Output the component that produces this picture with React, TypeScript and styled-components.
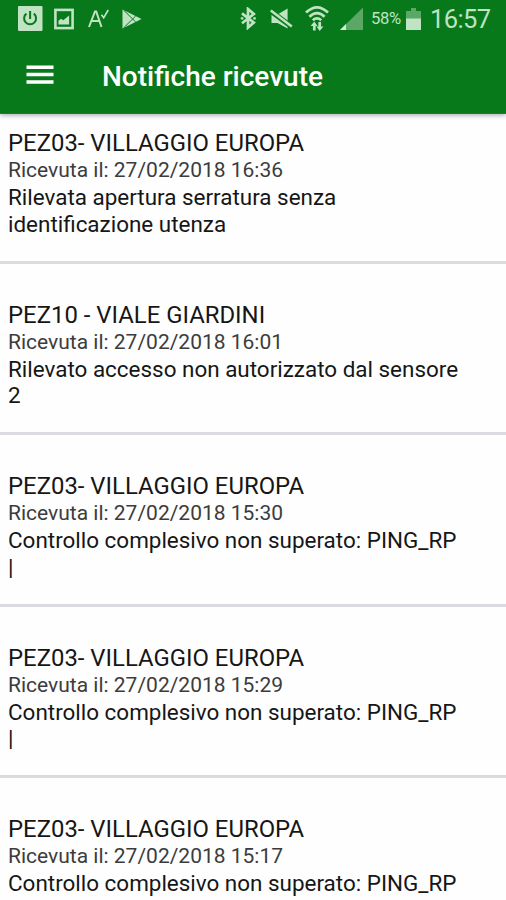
import React from "react";
import styled, { createGlobalStyle } from "styled-components";

const GREEN = "#08791b";
const PALE = "#bfe3c3";

const GlobalStyle = createGlobalStyle`
  *, *::before, *::after { box-sizing: border-box; }
  body {
    margin: 0;
    overflow: hidden;
    background: #fefefe;
    font-family: Roboto, "Liberation Sans", sans-serif;
  }
`;

const Screen = styled.div`
  display: flex;
  flex-direction: column;
  width: 506px;
  height: 900px;
  overflow: hidden;
  background: #fefefe;
`;

const Header = styled.header`
  flex: none;
  height: 114px;
  background: ${GREEN};
  border-bottom: 1px solid #2b7537;
  box-shadow: 0 1px 5px rgba(40, 40, 70, 0.45);
  z-index: 1;
`;

const StatusBar = styled.div`
  display: flex;
  align-items: center;
  height: 37px;
  padding: 0 15px 0 18px;
  color: ${PALE};
`;

const StatusIcon = styled.svg<{ $gap?: number }>`
  display: block;
  flex: none;
  margin-right: ${(p) => p.$gap ?? 0}px;
`;

const Spacer = styled.div`
  flex: 1;
`;

const BatteryLevel = styled.span`
  width: 31px;
  margin-right: 4px;
  font-size: 16.6px;
  line-height: 38px;
  letter-spacing: -0.3px;
  white-space: nowrap;
`;

const Clock = styled.time`
  width: 61px;
  font-size: 25.5px;
  line-height: 40px;
  letter-spacing: -0.6px;
  white-space: nowrap;
`;

const Toolbar = styled.div`
  display: flex;
  align-items: center;
  height: 76px;
  padding-left: 26px;
`;

const MenuButton = styled.button`
  display: block;
  width: 28px;
  height: 20px;
  margin: 0 48px 0 0;
  padding: 0;
  border: 0;
  background: none;
`;

const Title = styled.h1`
  margin: 4px 0 0;
  color: #fff;
  font-size: 28px;
  font-weight: 500;
  line-height: 32px;
  white-space: nowrap;
`;

const List = styled.ul`
  margin: 0;
  padding: 0;
  list-style: none;
`;

const Item = styled.li<{ $first?: boolean }>`
  height: ${(p) => (p.$first ? 149.5 : 171.6)}px;
  padding: ${(p) => (p.$first ? 15 : 37)}px 8px 0;
  border-bottom: 3px solid #dadae1;
`;

const Place = styled.h2`
  margin: 0;
  color: #161616;
  font-size: 23.9px;
  font-weight: 400;
  line-height: 28px;
  white-space: nowrap;
`;

const Received = styled.p`
  margin: 0;
  color: #3c3c3c;
  font-size: 21px;
  font-weight: 400;
  line-height: 27px;
  white-space: nowrap;
`;

const Message = styled.p`
  margin: 0;
  color: #161616;
  font-size: 22.45px;
  font-weight: 400;
  line-height: 26.6px;
  white-space: pre;
`;

const notices = [
  { place: "PEZ03- VILLAGGIO EUROPA", date: "27/02/2018 16:36", text: "Rilevata apertura serratura senza\nidentificazione utenza" },
  { place: "PEZ10 - VIALE GIARDINI", date: "27/02/2018 16:01", text: "Rilevato accesso non autorizzato dal sensore\n2" },
  { place: "PEZ03- VILLAGGIO EUROPA", date: "27/02/2018 15:30", text: "Controllo complesivo non superato: PING_RP\n|" },
  { place: "PEZ03- VILLAGGIO EUROPA", date: "27/02/2018 15:29", text: "Controllo complesivo non superato: PING_RP\n|" },
  { place: "PEZ03- VILLAGGIO EUROPA", date: "27/02/2018 15:17", text: "Controllo complesivo non superato: PING_RP" },
];

const PowerIcon = () => (
  <StatusIcon $gap={11} width="25" height="25" viewBox="0 0 25 25">
    <rect width="24.5" height="25" rx="1" fill={PALE} />
    <path d="M8.4 7.6a6 6 0 1 0 7.4 0M12.1 5v8" fill="none" stroke={GREEN} strokeWidth="2" />
  </StatusIcon>
);

const PictureIcon = () => (
  <StatusIcon $gap={14} width="20" height="22" viewBox="0 0 20 22">
    <rect x="1.4" y="1.9" width="17.2" height="18.2" fill="none" stroke={PALE} strokeWidth="2.6" />
    <path d="M4.5 16.5v-3.8l2.5-2 2.3 1.6 5.8-4.8v9z" fill={PALE} />
  </StatusIcon>
);

const FontCheckIcon = () => (
  <StatusIcon $gap={13} width="21" height="20" viewBox="0 0 21 20">
    <path d="M1 18 7 2.5h1.2L13.5 18M3.4 12h8.2" fill="none" stroke={PALE} strokeWidth="2" />
    <path d="m13.5 5.8 2.2 3L20.2 1" fill="none" stroke={PALE} strokeWidth="1.7" />
  </StatusIcon>
);

const PlayIcon = () => (
  <StatusIcon width="20" height="20" viewBox="0 0 20 20">
    <path d="M.5.5 19.5 10 .5 19.5z" fill={PALE} />
    <path d="M1.5 1 13.7 13M1.5 19 13.7 7" stroke={GREEN} strokeWidth="1" />
  </StatusIcon>
);

const BluetoothIcon = () => (
  <StatusIcon $gap={13} width="17" height="23" viewBox="0 0 17 23">
    <path d="m2 6.4 11.8 9.2-5.8 5V2l5.8 5L2 16.2" fill="none" stroke={PALE} strokeWidth="2.7" />
    <path d="M.8 11.4h2.6M13.2 11.4h2.6" stroke={PALE} strokeWidth="2.4" />
  </StatusIcon>
);

const MutedIcon = () => (
  <StatusIcon $gap={12} width="23" height="22" viewBox="0 0 23 22">
    <path d="M1.5 6.5h6L17.6.5v20L7.5 15h-6z" fill={PALE} />
    <path d="m0 2.6 22 16.4" stroke={GREEN} strokeWidth="5.2" />
    <path d="m.8 2.5 21 16" stroke={PALE} strokeWidth="2.6" />
  </StatusIcon>
);

const WifiIcon = () => (
  <StatusIcon $gap={11} width="24" height="27" viewBox="0 0 24 27">
    <path d="M1 7.5q11-10.4 22 0M4.4 11.7q7.6-7.2 15.2 0M7.8 15.2q4.2-3.8 8.4 0" fill="none" stroke={PALE} strokeWidth="2.7" />
    <path d="M9.3 25.5v-6M14.7 17v6" stroke={PALE} strokeWidth="2.7" />
    <path d="M5.6 21 9.3 16.5l3.2 4.5zM11.5 21.4h6.9l-3.7 4.6z" fill={PALE} />
  </StatusIcon>
);

const SignalIcon = () => (
  <StatusIcon $gap={8} width="23" height="23" viewBox="0 0 23 23">
    <path d="M0 23 23 .5V23z" fill="#5ba866" />
    <path d="m0 23 6-5.9V23z" fill="#d5edd6" />
  </StatusIcon>
);

const BatteryIcon = () => (
  <StatusIcon $gap={9} width="15" height="22" viewBox="0 0 15 22">
    <path d="M0 3h5V0h5v3h5v9H0z" fill="#5ba866" />
    <path d="M0 10.5h15V22H0z" fill={PALE} />
  </StatusIcon>
);

export default function App() {
  return (
    <Screen>
      <GlobalStyle />
      <Header>
        <StatusBar>
          <PowerIcon />
          <PictureIcon />
          <FontCheckIcon />
          <PlayIcon />
          <Spacer />
          <BluetoothIcon />
          <MutedIcon />
          <WifiIcon />
          <SignalIcon />
          <BatteryLevel>58%</BatteryLevel>
          <BatteryIcon />
          <Clock>16:57</Clock>
        </StatusBar>
        <Toolbar>
          <MenuButton aria-label="Menu">
            <svg width="28" height="20" viewBox="0 0 28 20" display="block">
              <path d="M.5 2.2h27M.5 9.6h27M.5 17h27" stroke="#fff" strokeWidth="3.5" />
            </svg>
          </MenuButton>
          <Title>Notifiche ricevute</Title>
        </Toolbar>
      </Header>
      <List>
        {notices.map((n, i) => (
          <Item key={i} $first={i === 0}>
            <Place>{n.place}</Place>
            <Received>Ricevuta il: {n.date}</Received>
            <Message>{n.text}</Message>
          </Item>
        ))}
      </List>
    </Screen>
  );
}
